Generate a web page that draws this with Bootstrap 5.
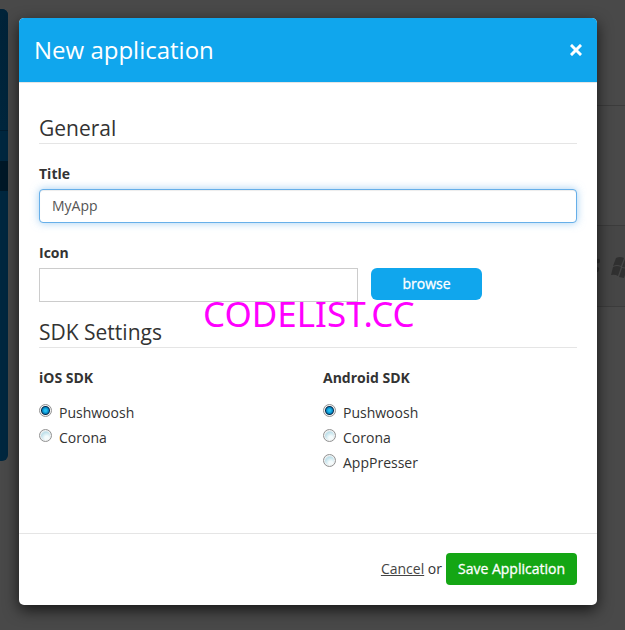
<!DOCTYPE html>
<html lang="en">
<head>
<meta charset="utf-8">
<meta name="viewport" content="width=device-width, initial-scale=1">
<title>New application</title>
<link rel="stylesheet" href="https://cdn.jsdelivr.net/npm/bootstrap@5.3.0/dist/css/bootstrap.min.css">
<style>
body { background: #494949; color: #333; font: 14px/20px "Open Sans", sans-serif; }
.stage { min-height: 100vh; overflow: hidden; }
.side-nav { width: 8px; height: 452px; margin-top: 9px; background: #00273f; border-radius: 0 6px 6px 0; overflow: hidden; }
.side-item { height: 30px; }
.side-top { height: 122px; background: linear-gradient(#002339, #00263d); border-bottom: 1px solid #001d30; }
.side-active { background: #001827; }
.page-rows { width: 60px; }
.page-row { border-bottom: 1px solid #3c3c3c; }
.row-head { height: 106px; }
.row-mid { height: 120px; }
.row-icons { height: 81px; background: #464646; }
.dialog-layer { inset: 0; padding: 18px 28px 25px 19px; }
.dialog-box { background: #fff; border: 0; border-radius: 5px; box-shadow: 0 5px 15px rgba(0,0,0,.7); color: #333; overflow: visible; }
.dialog-head { background: #10a6ed; color: #fff; padding: 15px; height: 65px; border-bottom: 1px solid #e5e5e5; border-radius: 5px 5px 0 0; }
.dialog-head h1 { font-size: 24px; line-height: 34px; font-weight: 400; }
.close-x { border: 0; background: none; padding: 0; width: 12px; height: 12px; line-height: 0; color: #fff; }
.dialog-main { padding: 30px 20px 58px; }
.section-title { font-size: 21px; line-height: 30px; font-weight: 400; border-bottom: 1px solid #e5e5e5; margin: 0 0 20px; }
.field-name { display: block; font-size: 14px; line-height: 20px; font-weight: 700; margin-bottom: 5px; }
.title-input { height: 34px; padding: 5px 12px 7px; font-size: 14px; line-height: 20px; color: #555; border-radius: 4px; }
.title-input, .title-input:focus { border-color: #66afe9; color: #555; box-shadow: inset 0 1px 1px rgba(0,0,0,.075), 0 0 8px rgba(102,175,233,.6); }
.field-block { margin-bottom: 20px; }
.icon-block { margin-bottom: 15px; }
.icon-row { gap: 13px; }
.path-input { flex: 0 1 319px; min-width: 0; height: 34px; border: 1px solid #ccc; background: #fff; padding: 6px 12px; }
.browse-btn { width: 111px; height: 32px; padding: 0; font-size: 14px; line-height: 20px; color: #fff; background: #10a6ed; border: 0; border-radius: 6px; -webkit-text-stroke: .3px #fff; }
.sdk-row { --bs-gutter-x: 30px; }
.sdk-legend { font-size: 14px; line-height: 20px; font-weight: 700; margin-bottom: 12px; }
.sdk-choice { height: 25px; gap: 7px; }
.sdk-choice label { line-height: 25px; }
.sdk-radio { appearance: none; flex: none; width: 13px; height: 13px; margin: 4px 0 0; border: 1px solid #929292; border-radius: 50%; background: radial-gradient(circle at 60% 70%, #f4fbfc 0 2px, #bfe0ea 6px, #e4eef1 8px) border-box; box-shadow: inset 0 0 0 1px #f2f2f2; }
.sdk-radio:checked { background: radial-gradient(circle at 50% 50%, #22c0f2 0 1px, #0788c4 3px, #00284a 4px, #00284a 5px, #f2f2f2 5px) border-box; }
.dialog-foot { border-top: 1px solid #e5e5e5; padding: 19px 20px 20px; gap: 4px; }
.cancel-link { color: #444; }
.save-btn { height: 32px; padding: 0 12px; font-size: 14px; line-height: 20px; color: #fff; background: #14a614; border: 0; border-radius: 4px; -webkit-text-stroke: .3px #fff; }
.stamp { left: 203px; top: 293px; font: 35px/41px "Noto Sans", sans-serif; color: #f0f; pointer-events: none; white-space: nowrap; }
</style>
</head>
<body>
<div class="stage position-relative">
  <div class="d-flex justify-content-between align-items-start" aria-hidden="true">
    <div class="side-nav">
      <div class="side-top"></div>
      <div class="side-item"></div>
      <div class="side-item side-active"></div>
    </div>
    <div class="page-rows">
      <div class="page-row row-head"></div>
      <div class="page-row row-mid"></div>
      <div class="page-row row-icons d-flex align-items-center justify-content-end">
        <svg width="60" height="28" viewBox="0 0 60 28" fill="#303030">
          <path d="M32 7q3-1 3 2t-3 2zM31 15q4 0 3 3t-3 2z"/>
          <path d="M51 6q4-2 8 0l-3 8q-4-2-8 0zM60 7l5 1-3 8-5-1zM48 15q4-2 8 0l-3 9q-3-2-7-1zM57 16l5 1-3 9-5-1z"/>
        </svg>
      </div>
    </div>
  </div>

  <div class="dialog-layer position-absolute">
    <div class="dialog-box modal-content position-relative" role="dialog" aria-labelledby="dialogTitle">
      <div class="dialog-head d-flex align-items-center justify-content-between">
        <h1 class="m-0" id="dialogTitle">New application</h1>
        <button type="button" class="close-x" aria-label="Close">
          <svg width="12" height="12" viewBox="0 0 12 12"><path d="M2 2l8 8M10 2l-8 8" stroke="currentColor" stroke-width="3" fill="none" stroke-linecap="square"/></svg>
        </button>
      </div>
      <form>
        <div class="dialog-main">
          <h2 class="section-title">General</h2>
          <div class="field-block">
            <label class="field-name" for="appTitle">Title</label>
            <input class="form-control title-input" id="appTitle" type="text" value="MyApp">
          </div>
          <div class="icon-block">
            <label class="field-name" for="appIcon">Icon</label>
            <div class="icon-row d-flex align-items-start">
              <input class="path-input" id="appIcon" type="text">
              <button type="button" class="btn browse-btn">browse</button>
            </div>
          </div>
          <h2 class="section-title">SDK Settings</h2>
          <div class="row sdk-row">
            <fieldset class="col-6">
              <legend class="sdk-legend">iOS SDK</legend>
              <div class="sdk-choice d-flex align-items-start"><input class="sdk-radio" type="radio" name="ios" id="iosPush" checked><label for="iosPush">Pushwoosh</label></div>
              <div class="sdk-choice d-flex align-items-start"><input class="sdk-radio" type="radio" name="ios" id="iosCorona"><label for="iosCorona">Corona</label></div>
            </fieldset>
            <fieldset class="col-6">
              <legend class="sdk-legend">Android SDK</legend>
              <div class="sdk-choice d-flex align-items-start"><input class="sdk-radio" type="radio" name="android" id="andPush" checked><label for="andPush">Pushwoosh</label></div>
              <div class="sdk-choice d-flex align-items-start"><input class="sdk-radio" type="radio" name="android" id="andCorona"><label for="andCorona">Corona</label></div>
              <div class="sdk-choice d-flex align-items-start"><input class="sdk-radio" type="radio" name="android" id="andPresser"><label for="andPresser">AppPresser</label></div>
            </fieldset>
          </div>
        </div>
        <div class="dialog-foot d-flex align-items-center justify-content-end">
          <span><a class="cancel-link" href="#">Cancel</a> or</span>
          <button type="submit" class="btn save-btn">Save Application</button>
        </div>
      </form>
    </div>
  </div>
  <div class="stamp position-absolute">CODELIST.CC</div>
</div>
<script src="https://cdn.jsdelivr.net/npm/bootstrap@5.3.0/dist/js/bootstrap.bundle.min.js"></script>
</body>
</html>
